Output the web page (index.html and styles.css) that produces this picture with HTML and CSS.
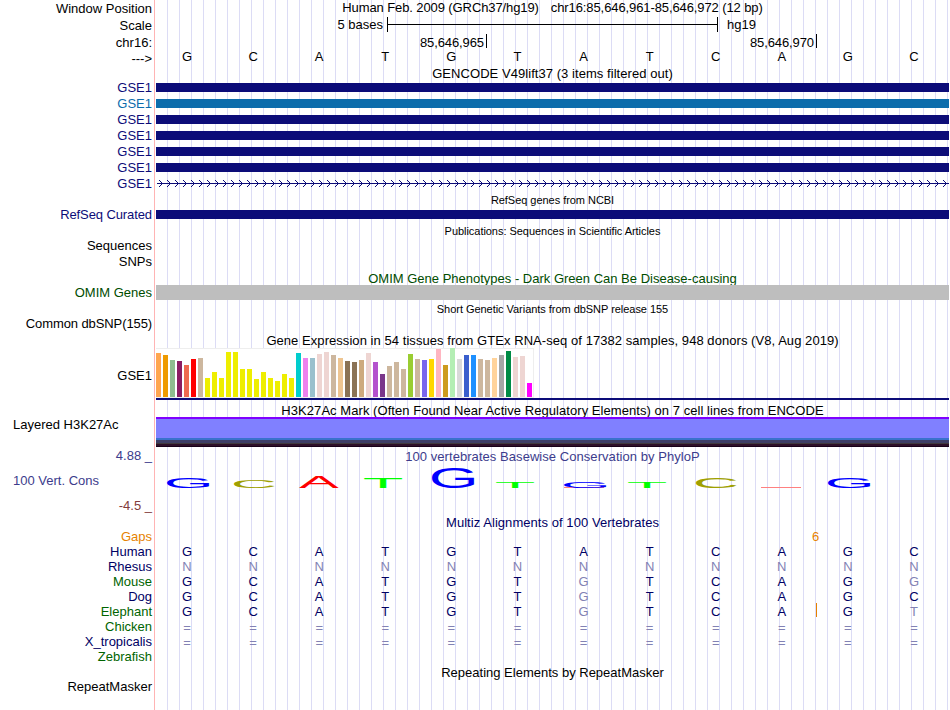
FILE: index.html
```
<!DOCTYPE html>
<html lang="en">
  <head>
    <meta charset="utf-8">
    <title>chr16:85,646,961-85,646,972</title>
    <link rel="stylesheet" href="styles.css">
  </head>
  <body>
    <div class="browser">
      <!-- position and ruler -->
      <div class="row h17"><div class="label">Window Position</div><div class="track position"><span>Human Feb. 2009 (GRCh37/hg19)</span><span>chr16:85,646,961-85,646,972 (12 bp)</span></div></div>
      <div class="row h17">
        <div class="label">Scale</div>
        <div class="track scale"><span>5 bases</span><div class="scale-bar"></div><span>hg19</span></div>
      </div>
      <div class="row h16 chrom">
        <div class="label">chr16:</div>
        <div class="track ruler"><div class="tick">85,646,965</div><div class="tick">85,646,970</div></div>
      </div>
      <div class="row h15 bases-row"><div class="label strand">---&gt;</div><div class="track bases" data-seq="GCATGTATCAGC"></div></div>

      <!-- genes -->
      <div class="row h15"><div class="label"></div><div class="track title">GENCODE V49lift37 (3 items filtered out)</div></div>
      <div class="row h16 gene"><div class="label">GSE1</div><div class="track"><div class="item"></div></div></div>
      <div class="row h16 gene light"><div class="label">GSE1</div><div class="track"><div class="item"></div></div></div>
      <div class="row h16 gene"><div class="label">GSE1</div><div class="track"><div class="item"></div></div></div>
      <div class="row h16 gene"><div class="label">GSE1</div><div class="track"><div class="item"></div></div></div>
      <div class="row h16 gene"><div class="label">GSE1</div><div class="track"><div class="item"></div></div></div>
      <div class="row h16 gene"><div class="label">GSE1</div><div class="track"><div class="item"></div></div></div>
      <div class="row h16 gene">
        <div class="label">GSE1</div>
        <div class="track">
          <svg class="intron" width="793" height="7" shape-rendering="crispEdges">
            <defs>
              <pattern id="arrow" width="8" height="7" patternUnits="userSpaceOnUse">
                <path d="M3 0h1v1h-1zM4 1h1v1h-1zM5 2h1v1h-1zM6 3h1v1h-1zM5 4h1v1h-1zM4 5h1v1h-1zM3 6h1v1h-1z" fill="#0c0c78"/>
              </pattern>
            </defs>
            <rect x="1" y="3" width="792" height="1" fill="#0c0c78"/>
            <rect width="793" height="7" fill="url(#arrow)"/>
          </svg>
        </div>
      </div>
      <div class="row h15"><div class="label"></div><div class="track title small">RefSeq genes from NCBI</div></div>
      <div class="row h16 gene"><div class="label tight">RefSeq Curated</div><div class="track"><div class="item"></div></div></div>

      <!-- publications and variants -->
      <div class="row h16 publications"><div class="label"></div><div class="track title small">Publications: Sequences in Scientific Articles</div></div>
      <div class="row h15 sequences"><div class="label">Sequences</div><div class="track"></div></div>
      <div class="row h16"><div class="label">SNPs</div><div class="track"></div></div>
      <div class="row h15 omim"><div class="label"></div><div class="track title">OMIM Gene Phenotypes - Dark Green Can Be Disease-causing</div></div>
      <div class="row h15 omim"><div class="label">OMIM Genes</div><div class="track omim-item"></div></div>
      <div class="row h16"><div class="label"></div><div class="track title small">Short Genetic Variants from dbSNP release 155</div></div>
      <div class="row h16"><div class="label tight">Common dbSNP(155)</div><div class="track"></div></div>

      <!-- expression -->
      <div class="row h16"><div class="label"></div><div class="track title">Gene Expression in 54 tissues from GTEx RNA-seq of 17382 samples, 948 donors (V8, Aug 2019)</div></div>
      <div class="row gtex">
        <div class="label">GSE1</div>
        <div class="track"><div class="gtex-bars" id="gtex"></div><div class="gtex-gene"></div></div>
      </div>
      <div class="row h15"><div class="label"></div><div class="track title">H3K27Ac Mark (Often Found Near Active Regulatory Elements) on 7 cell lines from ENCODE</div></div>
      <div class="row h3k"><div class="label left">Layered H3K27Ac</div><div class="track layers"></div></div>

      <!-- conservation -->
      <div class="row cons">
        <div class="label cons-labels"><span>4.88 _</span><span class="cons-name">100 Vert. Cons</span><span class="cons-min">-4.5 _</span></div>
        <div class="track">
          <div class="title cons-title">100 vertebrates Basewise Conservation by PhyloP</div>
          <svg class="logo" id="logo" width="793" height="24"></svg>
        </div>
      </div>
      <div class="row multiz"><div class="label"></div><div class="track title">Multiz Alignments of 100 Vertebrates</div></div>
      <div class="row h15 gaps"><div class="label">Gaps</div><div class="track"><span class="gap-count">6</span></div></div>
      <div class="row h15 align"><div class="label">Human</div><div class="track bases" data-seq="GCATGTATCAGC"></div></div>
      <div class="row h15 align"><div class="label">Rhesus</div><div class="track bases" data-seq="nnnnnnnnnnnn"></div></div>
      <div class="row h15 align green"><div class="label">Mouse</div><div class="track bases" data-seq="GCATGTgTCAGg"></div></div>
      <div class="row h15 align"><div class="label">Dog</div><div class="track bases" data-seq="GCATGTgTCAGC"></div></div>
      <div class="row h15 align green"><div class="label">Elephant</div><div class="track bases insert" data-seq="GCATGTgTCAGt"></div></div>
      <div class="row h15 align green"><div class="label">Chicken</div><div class="track bases unaligned" data-seq="============"></div></div>
      <div class="row h15 align"><div class="label">X_tropicalis</div><div class="track bases unaligned" data-seq="============"></div></div>
      <div class="row h15 align green"><div class="label">Zebrafish</div><div class="track"></div></div>

      <div class="row h16"><div class="label"></div><div class="track title plain">Repeating Elements by RepeatMasker</div></div>
      <div class="row h15 repeats"><div class="label">RepeatMasker</div><div class="track"></div></div>
    </div>
    <script src="tracks.js"></script>
  </body>
</html>
```
FILE: styles.css
```
body {
  margin: 0;
  background: #fff;
  color: #000;
  font-family: "Liberation Sans", Arial, Helvetica, sans-serif;
  font-size: 13px;
}
.browser {
  width: 949px;
  height: 710px;
  overflow: hidden;
  /* red label divider, then a guideline every 12px */
  background:
    linear-gradient(#ffb4b4, #ffb4b4) 154px 0 / 1px 100% no-repeat,
    repeating-linear-gradient(to right, transparent 0 11px, #dcdcf5 11px 12px) 156px 0 / 793px 100% no-repeat;
}
.row {
  display: flex;
  white-space: nowrap;
}
.h15 { height: 15px; line-height: 15px; }
.h16 { height: 16px; line-height: 16px; }
.h17 { height: 17px; line-height: 17px; }
.label {
  width: 152px;
  margin-right: 4px;
  text-align: right;
  flex: none;
}
.label.left {
  box-sizing: border-box;
  padding-left: 13px;
  text-align: left;
}
.tight {
  letter-spacing: -0.1px;
}
.track {
  width: 793px;
  flex: none;
}
.title {
  text-align: center;
  letter-spacing: 0.055px;
}
.h15 .title { line-height: 17px; }
.h16 .title { line-height: 18px; }
.title.small {
  font-size: 11px;
  letter-spacing: -0.04px;
}
.publications .title {
  line-height: 16px;
}
.sequences {
  line-height: 13px;
}
.omim .title,
.title.plain {
  letter-spacing: 0;
}
.position {
  display: flex;
  justify-content: center;
  gap: 12px;
  line-height: 15px;
  letter-spacing: -0.1px;
}

/* ruler */
.scale {
  display: grid;
  grid-template-columns: 227px 331px auto;
  column-gap: 4px;
  line-height: 16px;
}
.scale span:first-child {
  text-align: right;
}
.scale span:last-child {
  padding-left: 5px;
}
.scale-bar {
  height: 15px;
  box-sizing: border-box;
  border: solid #000;
  border-width: 0 1px;
  background: linear-gradient(#000, #000) 0 7px / 100% 1px no-repeat;
}
.ruler {
  display: flex;
}
.chrom .label {
  line-height: 17px;
}
.tick {
  width: 328px;
  height: 14px;
  padding-right: 2px;
  line-height: 17px;
  letter-spacing: -0.1px;
  text-align: right;
  border-right: 1px solid #000;
}
.tick:last-child {
  width: 327px;
}
.bases {
  display: grid;
  grid-template-columns: repeat(12, 1fr);
  position: relative;
  left: -2px;
  text-align: center;
}
.bases-row .bases {
  line-height: 14px;
}
.strand {
  line-height: 17px;
}

/* genes */
.gene {
  color: #0c0c78;
}
.light {
  color: #0c6cac;
}
.item {
  height: 9px;
  margin-top: 3px;
  background: currentColor;
}
.intron {
  display: block;
  margin-top: 4px;
}
.omim {
  color: #004c00;
}
.omim-item {
  background: #bebebe;
}

/* expression */
.gtex {
  height: 54px;
}
.gtex .label {
  line-height: 56px;
}
.gtex-bars {
  display: flex;
  align-items: flex-end;
  gap: 2px;
  box-sizing: border-box;
  width: 378px;
  height: 50px;
  background: #fff;
  border: solid #eee;
  border-width: 1px 1px 1px 0;
}
.gtex-bars div {
  width: 5px;
  flex: none;
}
.gtex-gene {
  height: 2px;
  background: #0c0c78;
}
.h3k {
  height: 30px;
}
.h3k .label {
  line-height: 15px;
}
.layers {
  background: linear-gradient(#7f00ff 0 2px, #8080ff 2px 21px, #3a72cc 21px 23px, #3e3e66 23px 26px, #403a3e 26px 27px, #2d0f28 27px 29px, #180018 29px);
}

/* conservation */
.cons {
  height: 68px;
  color: #3c3c8c;
}
.cons-labels {
  display: flex;
  flex-direction: column;
  align-items: flex-end;
  justify-content: space-between;
  line-height: 18px;
}
.cons-name {
  align-self: flex-start;
  padding-left: 13px;
}
.cons-min {
  color: #823c3c;
}
.cons-title {
  line-height: 19px;
  height: 19px;
}
.logo {
  display: block;
  overflow: visible;
}
.multiz {
  height: 14px;
  line-height: 15px;
}
.multiz,
.align {
  color: #000064;
}
.gaps {
  color: #e68200;
}
.gap-count {
  display: block;
  width: 7px;
  margin-left: 656px;
}
.green .label {
  color: #006400;
}
.align .mismatch {
  color: #8282b4;
}
.unaligned {
  line-height: 17px;
}
/* inserted bases in the elephant sequence */
.insert::after {
  content: "";
  position: absolute;
  left: 662px;
  top: -1px;
  width: 1px;
  height: 14px;
  background: #e68200;
}
.repeats {
  line-height: 13px;
}
```
FILE: tracks.js
```
// one letter per base, lower case for the ones that differ from human
document.querySelectorAll('.bases').forEach(function (track) {
  track.dataset.seq.split('').forEach(function (base) {
    var cell = document.createElement('span');
    cell.textContent = base.toUpperCase();
    if (base === '=' || base !== base.toUpperCase()) {
      cell.className = 'mismatch';
    }
    track.appendChild(cell);
  });
});

// GTEx tissues: [height, color]
var tissues = [
  [44, '#ffa54f'], [42, '#ee9a00'], [37, '#8fbc8f'], [36, '#8b1c62'], [32, '#ee6a50'], [38, '#ff0000'],
  [39, '#cdb79e'], [19, '#eeee00'], [25, '#eeee00'], [19, '#eeee00'], [45, '#eeee00'], [45, '#eeee00'],
  [28, '#eeee00'], [28, '#eeee00'], [18, '#eeee00'], [25, '#eeee00'], [19, '#eeee00'], [16, '#eeee00'],
  [23, '#eeee00'], [19, '#eeee00'], [44, '#00cdcd'], [39, '#ee82ee'], [39, '#9ac0cd'], [43, '#eed5d2'],
  [45, '#eed5d2'], [42, '#cdb79e'], [39, '#eec591'], [36, '#8b7355'], [35, '#8b7355'], [37, '#cdaa7d'],
  [44, '#eed5d2'], [35, '#b452cd'], [23, '#7a378b'], [31, '#cdb79e'], [35, '#cdb79e'], [28, '#cdb79e'],
  [43, '#9acd32'], [38, '#cdb79e'], [37, '#7a67ee'], [38, '#ffd700'], [48, '#ffb6c1'], [32, '#cd9b1d'],
  [49, '#b4eeb4'], [38, '#d9d9d9'], [42, '#3a5fcd'], [42, '#1e90ff'], [38, '#cdb79e'], [37, '#cdb79e'],
  [39, '#ffd39b'], [42, '#a6a6a6'], [46, '#008b45'], [40, '#eed5d2'], [41, '#eed5d2'], [14, '#ff00ff']
];
tissues.forEach(function (t) {
  var bar = document.createElement('div');
  bar.style.height = t[0] + 'px';
  bar.style.background = t[1];
  document.getElementById('gtex').appendChild(bar);
});

// conservation logo: base, left, width, height, color
var logo = [
  ['G', 11, 43, 11, '#0000ff'],
  ['C', 78, 41, 8, '#a0a000'],
  ['A', 143, 40, 11, '#ff0000'],
  ['T', 208, 38, 10, '#00ff00'],
  ['G', 276, 43, 21, '#0000ff'],
  ['T', 340, 38, 6, '#00ff00'],
  ['-', 408, 40, 1, '#ff8080'],
  ['G', 408, 43, 6.5, '#0000ff'],
  ['T', 472, 38, 6, '#00ff00'],
  ['C', 540, 41, 10, '#a0a000'],
  ['-', 605, 40, 1, '#ff8080'],
  ['G', 672, 43, 10, '#0000ff']
];
// ink box of each glyph at 100px: left, width, top, bottom
var glyphs = {
  G: [5, 67, 70, -1],
  C: [5, 64, 70, -1],
  A: [0, 67, 69, 0],
  T: [2, 57, 69, 0]
};
var svgNS = 'http://www.w3.org/2000/svg';
logo.forEach(function (l) {
  var el;
  if (l[0] === '-') {
    // score near zero, the letter is flattened to a line
    el = document.createElementNS(svgNS, 'rect');
    el.setAttribute('x', l[1]);
    el.setAttribute('y', 21);
    el.setAttribute('width', l[2]);
    el.setAttribute('height', l[3]);
  } else {
    var g = glyphs[l[0]];
    var sx = l[2] / g[1];
    var sy = l[3] / (g[2] - g[3]);
    el = document.createElementNS(svgNS, 'text');
    el.textContent = l[0];
    el.setAttribute('font-size', 100);
    el.setAttribute('transform', 'translate(' + (l[1] - g[0] * sx) + ' ' + (22 + g[3] * sy) + ') scale(' + sx + ' ' + sy + ')');
  }
  el.setAttribute('fill', l[4]);
  document.getElementById('logo').appendChild(el);
});
```
